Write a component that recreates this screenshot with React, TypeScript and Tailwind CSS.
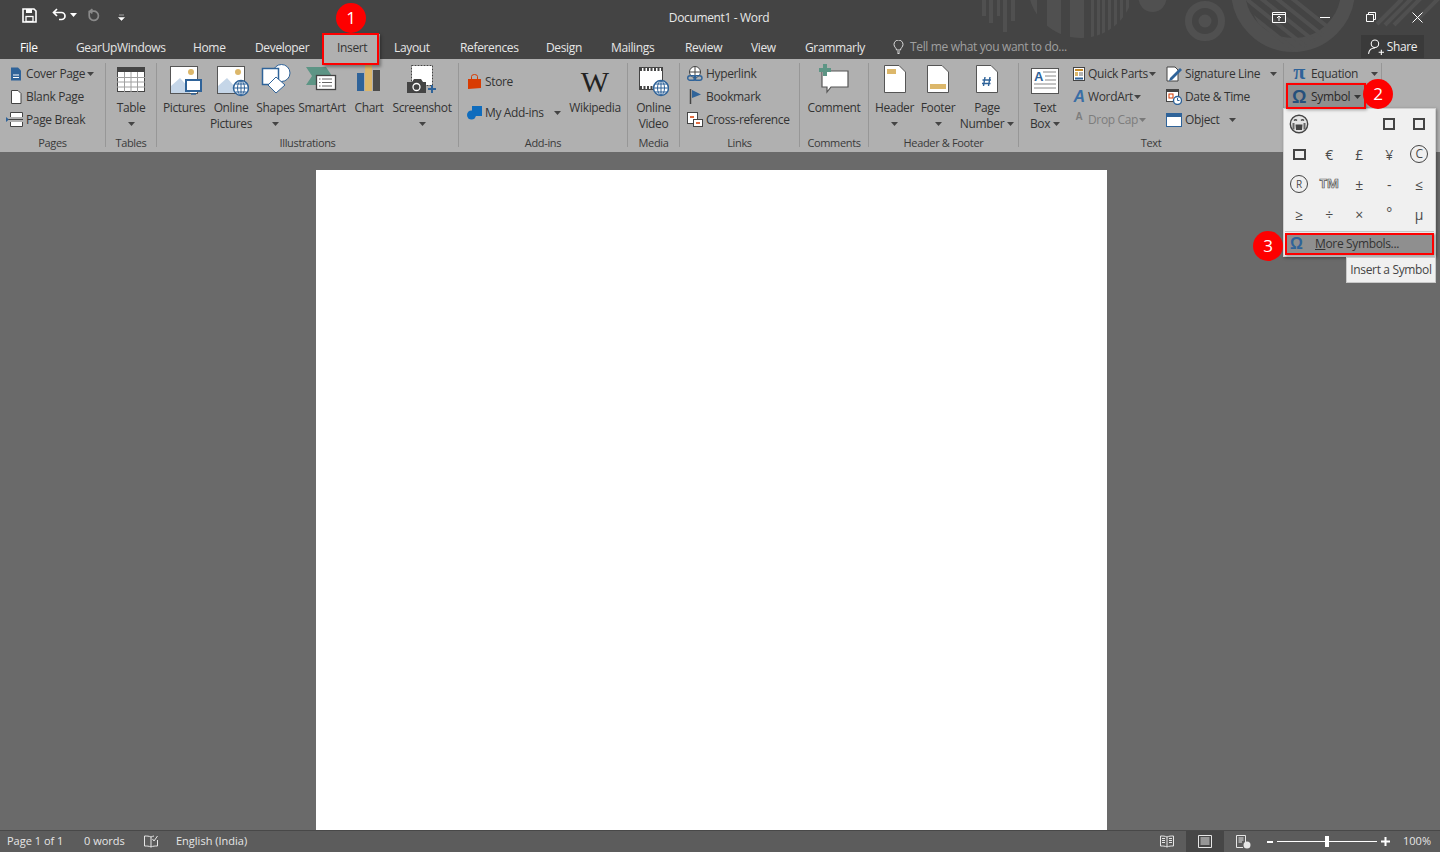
import type { ReactNode } from "react";

const font = "font-['Open_Sans','Noto_Sans',sans-serif]";

function Caret({ className = "" }: { className?: string }) {
  return (
    <svg width="7" height="4" viewBox="0 0 7 4" className={className}>
      <path d="M0 0h7L3.5 4z" fill="#444" />
    </svg>
  );
}

function BigButton({ w, lines, caret, inlineCaret, icon }: { w: string; lines: string[]; caret?: boolean; inlineCaret?: boolean; icon: ReactNode }) {
  return (
    <div className={`${w} flex flex-col items-center shrink-0`}>
      <div className="h-[37px] flex items-start justify-center">{icon}</div>
      {lines.map((l, i) => (
        <div key={l} className="h-[16px] leading-[16px] whitespace-nowrap flex items-center gap-[3px]">
          {l}
          {inlineCaret && i === lines.length - 1 && <Caret />}
        </div>
      ))}
      {caret && (
        <div className="h-[16px] flex items-center">
          <Caret />
        </div>
      )}
    </div>
  );
}

function SmallRow({ icon, label, caret, gap = "gap-[3px]", dim }: { icon: ReactNode; label: string; caret?: ReactNode; gap?: string; dim?: boolean }) {
  return (
    <div className={`h-[23px] flex items-center whitespace-nowrap ${gap} ${dim ? "text-[#7d7d7d]" : ""}`}>
      <div className="w-[16px] h-[16px] flex items-center justify-center shrink-0">{icon}</div>
      <span>{label}</span>
      {caret}
    </div>
  );
}

function Group({ w, label, children }: { w: string; label: string; children: ReactNode }) {
  return (
    <div className={`${w} shrink-0 h-[84px] mt-[4px] border-r border-[#979797] flex flex-col`}>
      <div className="h-[72px] flex">{children}</div>
      <div className="h-[12px] leading-[16px] text-center text-[11px] text-[#3a3a3a] whitespace-nowrap">{label}</div>
    </div>
  );
}

const blue = "#2f6399";

function Picture({ badge }: { badge: ReactNode }) {
  return (
    <svg width="32" height="32" viewBox="0 0 32 32" className="mt-[2px] ml-[4px]">
      <rect x="0.5" y="1.5" width="27" height="27" fill="#fff" stroke="#555" />
      <circle cx="21" cy="7" r="3" fill="#dcb76a" />
      <path d="M1 28V21L10 13L20 24V28z" fill="#c5d6e8" />
      {badge}
    </svg>
  );
}

function CalloutNum({ n, className }: { n: number; className: string }) {
  return (
    <div className={`absolute w-[30px] h-[30px] rounded-full bg-[#fe0000] text-white text-[17px] leading-[30px] text-center ${className}`}>{n}</div>
  );
}

const tabs = [
  { t: "File", w: "w-[56px]", c: "text-white" },
  { t: "GearUpWindows", w: "w-[117px]", c: "text-[#e6e6e6]" },
  { t: "Home", w: "w-[62px]", c: "text-[#e6e6e6]" },
  { t: "Developer", w: "w-[82px]", c: "text-[#e6e6e6]" },
  { t: "Insert", w: "w-[57px] bg-[#b0b0b0]", c: "text-[#333]" },
  { t: "Layout", w: "w-[66px]", c: "text-[#e6e6e6]" },
  { t: "References", w: "w-[86px]", c: "text-[#e6e6e6]" },
  { t: "Design", w: "w-[65px]", c: "text-[#e6e6e6]" },
  { t: "Mailings", w: "w-[74px]", c: "text-[#e6e6e6]" },
  { t: "Review", w: "w-[66px]", c: "text-[#e6e6e6]" },
  { t: "View", w: "w-[54px]", c: "text-[#e6e6e6]" },
  { t: "Grammarly", w: "w-[88px]", c: "text-[#e6e6e6]" },
];

function TitleArt() {
  const c = "#505050";
  return (
    <svg width="1440" height="59" viewBox="0 0 1440 59" className="absolute left-0 top-0 pointer-events-none">
      <defs>
        <clipPath id="big"><circle cx="1081" cy="-15" r="53" /></clipPath>
        <clipPath id="inner"><path d="M1246 0H1340L1322 36L1297 52L1270 46z" /></clipPath>
      </defs>
      <g fill={c}>
        <rect x="982" y="0" width="4" height="16" />
        <rect x="989" y="0" width="4" height="23" />
        <rect x="997" y="0" width="3" height="16" />
        <rect x="1003" y="0" width="4" height="32" />
        <rect x="1011" y="0" width="4" height="21" />
        <g clipPath="url(#big)">
          <rect x="1030" y="0" width="7" height="40" />
          <rect x="1047" y="0" width="14" height="40" />
          <rect x="1070" y="0" width="14" height="40" />
          <rect x="1091" y="0" width="3" height="40" />
          <rect x="1097" y="0" width="3" height="40" />
          <rect x="1102" y="0" width="3" height="40" />
          <rect x="1108" y="0" width="3" height="40" />
          <rect x="1114" y="0" width="3" height="40" />
          <rect x="1120" y="0" width="3" height="40" />
          <rect x="1126" y="0" width="3" height="40" />
        </g>
        <circle cx="1152.5" cy="-2" r="14" />
      </g>
      <circle cx="1205" cy="21" r="16.5" fill="none" stroke={c} strokeWidth="7" />
      <circle cx="1205" cy="21" r="6.5" fill={c} />
      <circle cx="1293" cy="-10" r="55" fill="none" stroke={c} strokeWidth="14" />
      <g clipPath="url(#inner)" stroke={c} strokeWidth="4">
        <path d="M1240 -6L1310 50M1248 -12L1318 44M1256 -18L1326 38M1232 0L1302 56M1264 -24L1334 32" />
      </g>
      <g stroke={c} strokeWidth="4">
        <path d="M1377 24L1402 -1M1385 25L1412 -2M1394 25L1421 -2M1417 20L1440 -3" />
      </g>
    </svg>
  );
}

export default function App() {
  return (
    <div className={`${font} relative w-[1440px] h-[852px] overflow-hidden bg-[#6a6a6a] flex flex-col text-[12px] text-[#333] tracking-[-0.35px]`}>
      {/* title bar + tabs */}
      <div className="relative h-[59px] bg-[#444444] shrink-0 flex flex-col">
        <TitleArt />
        <div className="relative h-[34px] grid grid-cols-[1fr_auto_1fr] items-center">
          <div className="flex items-center pl-[22px] pb-[4px]">
            <svg width="15" height="15" viewBox="0 0 15 15">
              <path d="M1 1H12L14 3V14H1z" fill="none" stroke="#fff" strokeWidth="1.6" />
              <rect x="4" y="1" width="6" height="4" fill="#fff" />
              <rect x="4" y="8.5" width="7" height="5" fill="none" stroke="#fff" strokeWidth="1.3" />
            </svg>
            <svg width="15" height="14" viewBox="0 0 15 14" className="ml-[15px]">
              <path d="M5 1L1.5 4.5L5 8M2 4.5H9.5A3.5 3.5 0 0 1 9.5 11.5H7" fill="none" stroke="#fff" strokeWidth="1.7" />
            </svg>
            <Caret className="ml-[3px] [&_path]:fill-white" />
            <svg width="15" height="15" viewBox="0 0 14 14" className="ml-[9px]">
              <path d="M3 2.5V7A4.3 4.3 0 1 0 7 3H4M6 1L3.5 3L6 5" fill="none" stroke="#8a8a8a" strokeWidth="1.6" />
            </svg>
            <svg width="7" height="7" viewBox="0 0 7 7" className="ml-[17px] mt-[4px]">
              <path d="M1 1H6M0.5 3.5h6L3.5 6.5z" fill="#fff" stroke="#fff" strokeWidth="0.5" />
            </svg>
          </div>
          <div className="text-[#e8e8e8] pr-[2px] pt-[2px]">Document1 - Word</div>
          <div className="flex items-center justify-end h-full">
            <div className="w-[46px] flex justify-center">
              <svg width="14" height="11" viewBox="0 0 14 11">
                <path d="M0.5 0.5H13.5V10.5H0.5zM0.5 2.5H13.5M7 9V4M5 6L7 4L9 6" fill="none" stroke="#fff" />
              </svg>
            </div>
            <div className="w-[46px] flex justify-center">
              <div className="w-[10px] h-px bg-white" />
            </div>
            <div className="w-[46px] flex justify-center">
              <svg width="10" height="10" viewBox="0 0 10 10">
                <path d="M0.5 2.5H7.5V9.5H0.5zM2.5 2.5V0.5H9.5V7.5H7.5" fill="none" stroke="#fff" />
              </svg>
            </div>
            <div className="w-[46px] flex justify-center">
              <svg width="11" height="11" viewBox="0 0 11 11">
                <path d="M0.5 0.5L10.5 10.5M10.5 0.5L0.5 10.5" stroke="#fff" />
              </svg>
            </div>
          </div>
        </div>
        <div className="relative h-[25px] flex items-stretch pl-[6px]">
          {tabs.map((t) => (
            <div key={t.t} className={`${t.w} ${t.c} pl-[14px] leading-[25px] whitespace-nowrap shrink-0 pt-px`}>
              {t.t}
            </div>
          ))}
          <div className="flex items-center ml-[14px] text-[#a0a0a0] whitespace-nowrap">
            <svg width="11" height="14" viewBox="0 0 11 14" className="mr-[6px]">
              <path d="M3.5 10C3.5 8 1 7 1 4.5A4.5 4.5 0 0 1 10 4.5C10 7 7.5 8 7.5 10zM4 12H7M4.5 13.5H6.5" fill="none" stroke="#ddd" />
            </svg>
            Tell me what you want to do...
          </div>
          <div className="ml-auto mr-[16px] mt-px mb-px w-[63px] bg-[#3a3a3a] text-[#eee] flex items-center justify-center gap-[3px]">
            <svg width="16" height="16" viewBox="0 0 15 15">
              <circle cx="6.5" cy="4.5" r="3.5" fill="none" stroke="#fff" />
              <path d="M0.5 14C1 10 3.5 8.5 6.5 8.5M10 12.5H15M12.5 10V15" fill="none" stroke="#fff" />
            </svg>
            Share
          </div>
        </div>
      </div>

      {/* ribbon */}
      <div className="h-[93px] shrink-0 bg-[#b0b0b0] flex items-start">
        <Group w="w-[106px]" label="Pages">
          <div className="pl-[8px] -mt-px flex flex-col">
            <SmallRow
              label="Cover Page"
              caret={<Caret />}
              gap="gap-[2px]"
              icon={<svg width="12" height="14" viewBox="0 0 12 14"><path d="M1 0.5H8L11 3.5V13.5H1z" fill={blue} /><path d="M3 8H9M3 10.5H9" stroke="#fff" /></svg>}
            />
            <SmallRow label="Blank Page" gap="gap-[2px]" icon={<svg width="12" height="14" viewBox="0 0 12 14"><path d="M1.5 0.5H8L11 3.5V13.5H1.5z" fill="#fff" stroke="#444" /></svg>} />
            <SmallRow
              label="Page Break"
              gap="gap-[2px]"
              icon={<svg width="18" height="15" viewBox="0 0 18 15" className="-ml-[2px] shrink-0"><path d="M4.5 5V0.5H16.5V5M4.5 10V14.5H16.5V10" fill="#fff" stroke="#444" /><path d="M1 7.5H17" stroke="#444" /><path d="M0 5L3 7.5L0 10z" fill={blue} /></svg>}
            />
          </div>
        </Group>
        <Group w="w-[51px]" label="Tables">
          <BigButton
            w="w-[50px]"
            lines={["Table"]}
            caret
            icon={
              <svg width="28" height="26" viewBox="0 0 28 26" className="mt-[4px]">
                <rect x="0.5" y="0.5" width="27" height="24" fill="#fff" stroke="#444" />
                <rect x="0" y="0" width="28" height="5" fill="#444" />
                <path d="M7.5 5V25M14 5V25M20.5 5V25M0 10.5H28M0 15H28M0 20H28" stroke="#a0a0a0" />
              </svg>
            }
          />
        </Group>
        <Group w="w-[302px]" label="Illustrations">
          <div className="flex pl-[3px]">
            <BigButton w="w-[48px]" lines={["Pictures"]} icon={<Picture badge={<g><rect x="16" y="15" width="15" height="11" fill="#fff" stroke={blue} strokeWidth="2" /><path d="M21 29H26" stroke={blue} strokeWidth="1.5" /></g>} />} />
            <BigButton
              w="w-[46px]"
              lines={["Online", "Pictures"]}
              icon={<Picture badge={<g><circle cx="24" cy="23" r="7.5" fill="#fff" stroke={blue} strokeWidth="1.5" /><path d="M17 23H31M24 16V30M18.5 19H29.5M18.5 27H29.5" stroke={blue} /><ellipse cx="24" cy="23" rx="3.5" ry="7" fill="none" stroke={blue} /></g>} />}
            />
            <BigButton
              w="w-[43px]"
              lines={["Shapes"]}
              caret
              icon={
                <svg width="30" height="30" viewBox="0 0 30 30" className="mt-[1px]">
                  <circle cx="20.5" cy="9" r="8.5" fill="#fff" stroke={blue} />
                  <rect x="1.5" y="4.5" width="16" height="16" fill="#fff" stroke={blue} strokeWidth="1.5" />
                  <path d="M15 13L24 21L15 29L7 21z" fill="#fff" stroke={blue} />
                </svg>
              }
            />
            <BigButton
              w="w-[50px]"
              lines={["SmartArt"]}
              icon={
                <svg width="32" height="28" viewBox="0 0 32 28" className="mt-[3px]">
                  <path d="M0 1H20L26 10L20 19H0L6 10z" fill="#5d9585" />
                  <rect x="10.5" y="9.5" width="19" height="14" fill="#fff" stroke="#444" strokeWidth="1.3" />
                  <path d="M13 13h1.5M16 13h10M13 16.5h1.5M16 16.5h10M13 20h1.5M16 20h10" stroke="#666" />
                </svg>
              }
            />
            <BigButton
              w="w-[44px]"
              lines={["Chart"]}
              icon={
                <svg width="24" height="28" viewBox="0 0 24 28" className="mt-[2px]">
                  <rect x="0" y="8" width="7" height="18" fill={blue} />
                  <rect x="8" y="0" width="7" height="26" fill="#dcb76a" />
                  <rect x="16" y="5" width="7" height="21" fill="#4b4b4b" />
                </svg>
              }
            />
            <BigButton
              w="w-[62px]"
              lines={["Screenshot"]}
              caret
              icon={
                <svg width="30" height="30" viewBox="0 0 30 30" className="mt-[2px]">
                  <rect x="4.5" y="0.5" width="21" height="20" fill="#fff" stroke="#444" strokeDasharray="2 1" />
                  <path d="M0 17H5L7 14H14L16 17H19V28H0z" fill="#444" />
                  <circle cx="9.5" cy="22" r="3.5" fill="#444" stroke="#fff" strokeWidth="1.3" />
                  <path d="M25 20V28M21 24H29" stroke={blue} strokeWidth="2" />
                </svg>
              }
            />
          </div>
        </Group>
        <Group w="w-[169px]" label="Add-ins">
          <div className="flex">
            <div className="w-[105px] pl-[7px] pt-[7px] flex flex-col gap-[8px]">
              <SmallRow label="Store" icon={<svg width="15" height="16" viewBox="0 0 15 16"><path d="M1 5H14V14L1 15z" fill="#d83b01" /><path d="M4.5 5V2.5A3 2 0 0 1 10.5 2.5V5" fill="none" stroke="#d83b01" /></svg>} />
              <SmallRow
                label="My Add-ins"
                caret={<Caret className="ml-[7px]" />}
                icon={<svg width="15" height="15" viewBox="0 0 15 15"><rect x="5" y="1" width="10" height="10" fill="#0f6cbd" /><circle cx="4.5" cy="10" r="4.5" fill="#0f6cbd" /></svg>}
              />
            </div>
            <div className="w-[62px] flex flex-col items-center">
              <div className="h-[37px] text-[30px] leading-[36px] text-[#222] font-['Liberation_Serif',serif] tracking-normal pt-[1px]">W</div>
              <div className="h-[16px] leading-[16px]">Wikipedia</div>
            </div>
          </div>
        </Group>
        <Group w="w-[52px]" label="Media">
          <BigButton
            w="w-[51px]"
            lines={["Online", "Video"]}
            icon={
              <svg width="30" height="30" viewBox="0 0 30 30" className="mt-[4px]">
                <rect x="0.5" y="0.5" width="23" height="22" fill="#fff" stroke="#444" />
                <path d="M1 2.5H23M1 20.5H23" stroke="#444" strokeWidth="3" strokeDasharray="2 1.5" />
                <circle cx="22" cy="21" r="7.5" fill="#fff" stroke={blue} strokeWidth="1.5" />
                <path d="M15 21H29M22 14V28M16 17H28M16 25H28" stroke={blue} />
                <ellipse cx="22" cy="21" rx="3.5" ry="7" fill="none" stroke={blue} />
              </svg>
            }
          />
        </Group>
        <Group w="w-[120px]" label="Links">
          <div className="pl-[7px] -mt-px flex flex-col">
            <SmallRow
              label="Hyperlink"
              icon={<svg width="16" height="16" viewBox="0 0 16 16"><circle cx="8" cy="6" r="5.5" fill="#fff" stroke="#444" /><path d="M2 6H14M8 0.5V11" stroke="#444" /><rect x="0.7" y="9.7" width="8" height="4.6" rx="2.3" fill="none" stroke={blue} strokeWidth="1.4" /><rect x="7" y="9.7" width="8" height="4.6" rx="2.3" fill="none" stroke={blue} strokeWidth="1.4" /></svg>}
            />
            <SmallRow label="Bookmark" icon={<svg width="14" height="15" viewBox="0 0 14 15"><path d="M2.5 0V15" stroke="#444" strokeWidth="1.5" /><path d="M4 1L13 5.5L4 9z" fill={blue} /></svg>} />
            <SmallRow
              label="Cross-reference"
              icon={<svg width="16" height="15" viewBox="0 0 16 15"><rect x="0.5" y="0.5" width="10" height="11" fill="#fff" stroke="#444" /><rect x="6.5" y="7.5" width="9" height="7" fill="#fff" stroke="#444" /><path d="M3 5H7M9 11H13" stroke="#d83b01" strokeWidth="1.5" /></svg>}
            />
          </div>
        </Group>
        <Group w="w-[69px]" label="Comments">
          <BigButton
            w="w-[68px]"
            lines={["Comment"]}
            icon={
              <svg width="32" height="30" viewBox="0 0 32 30" className="mt-[1px]">
                <path d="M4 7H30V23H13L9 28V23H4z" fill="#fff" stroke="#555" strokeWidth="1.2" />
                <path d="M5 0H9V4H13V8H9V12H5V8H1V4H5z" fill="#5d9585" />
              </svg>
            }
          />
        </Group>
        <Group w="w-[150px]" label="Header & Footer">
          <div className="flex pl-[2px]">
            <BigButton
              w="w-[47px]"
              lines={["Header"]}
              caret
              icon={<svg width="22" height="28" viewBox="0 0 22 28" className="mt-[2px]"><path d="M0.5 0.5H15L21.5 7V27.5H0.5z" fill="#fff" stroke="#555" /><rect x="3" y="4" width="9" height="5" fill="#dcb76a" /></svg>}
            />
            <BigButton
              w="w-[40px]"
              lines={["Footer"]}
              caret
              icon={<svg width="22" height="28" viewBox="0 0 22 28" className="mt-[2px]"><path d="M0.5 0.5H15L21.5 7V27.5H0.5z" fill="#fff" stroke="#555" /><rect x="3" y="19" width="16" height="5" fill="#dcb76a" /></svg>}
            />
            <BigButton
              w="w-[58px]"
              lines={["Page", "Number"]}
              inlineCaret
              icon={
                <svg width="22" height="28" viewBox="0 0 22 28" className="mt-[2px]">
                  <path d="M0.5 0.5H15L21.5 7V27.5H0.5z" fill="#fff" stroke="#555" />
                  <path d="M9 12L7.5 21M14 12L12.5 21M6.5 15H15M6 18.5H14.5" stroke={blue} strokeWidth="1.4" />
                </svg>
              }
            />
          </div>
        </Group>
        <Group w="w-[265px]" label="Text">
          <div className="flex">
            <BigButton
              w="w-[52px]"
              lines={["Text", "Box"]}
              inlineCaret
              icon={
                <svg width="28" height="26" viewBox="0 0 28 26" className="mt-[5px]">
                  <rect x="0.5" y="0.5" width="27" height="25" fill="#fff" stroke="#555" />
                  <path d="M12 4H25M14 8H25M14 12H25M3 16H25M3 20H25" stroke="#888" />
                  <text x="3" y="13" fontSize="13" fontWeight="700" fill={blue} fontFamily="Liberation Sans">A</text>
                </svg>
              }
            />
            <div className="w-[95px] -mt-px flex flex-col">
              <SmallRow
                label="Quick Parts"
                gap="gap-px"
                caret={<Caret />}
                icon={<svg width="12" height="14" viewBox="0 0 12 14"><rect x="0.5" y="0.5" width="11" height="13" fill="#fff" stroke="#444" /><rect x="2" y="2" width="8" height="2" fill="#c58b2a" /><rect x="2" y="5" width="3" height="4" fill="#dcb76a" /><path d="M6 6H10M6 8H10" stroke="#666" /><rect x="2" y="10.5" width="8" height="2" fill={blue} /></svg>}
              />
              <SmallRow
                label="WordArt"
                gap="gap-px"
                caret={<Caret />}
                icon={<span className="text-[16px] font-bold italic text-[#3a6ea5] leading-none font-['Liberation_Sans',sans-serif]">A</span>}
              />
              <SmallRow
                label="Drop Cap"
                dim
                gap="gap-px"
                caret={<Caret className="opacity-50" />}
                icon={<span className="text-[10px] font-bold text-[#7d7d7d] leading-none -mt-[6px] font-['Liberation_Sans',sans-serif]">A</span>}
              />
            </div>
            <div className="w-[118px] -mt-px flex flex-col">
              <SmallRow
                label="Signature Line"
                caret={<Caret className="ml-[7px]" />}
                icon={<svg width="16" height="16" viewBox="0 0 16 16"><path d="M1 1H9L12 4V15H1z" fill="#fff" stroke="#444" /><path d="M4 12L14 2L16 4L6 14L3 15z" fill={blue} /></svg>}
              />
              <SmallRow
                label="Date & Time"
                icon={<svg width="16" height="16" viewBox="0 0 16 16"><rect x="0.5" y="0.5" width="12" height="12" fill="#fff" stroke="#444" /><rect x="0" y="0" width="13" height="3" fill="#444" /><rect x="3" y="5" width="4" height="4" fill="none" stroke="#d83b01" /><circle cx="11.5" cy="11.5" r="4" fill="#fff" stroke={blue} strokeWidth="1.4" /><path d="M11.5 9V11.5H13.5" fill="none" stroke={blue} /></svg>}
              />
              <SmallRow
                label="Object"
                caret={<Caret className="ml-[7px]" />}
                icon={<svg width="16" height="14" viewBox="0 0 16 14"><rect x="0.5" y="0.5" width="15" height="13" fill="#fff" stroke={blue} /><rect x="0" y="0" width="16" height="4" fill={blue} /></svg>}
              />
            </div>
          </div>
        </Group>
        <Group w="w-[98px]" label="">
          <div className="pl-[7px] -mt-px flex flex-col">
            <SmallRow
              label="Equation"
              gap="gap-[4px]"
              caret={<Caret className="ml-[9px]" />}
              icon={<span className="text-[22px] leading-none text-[#2f6399] font-bold font-['Liberation_Serif',serif] -mt-[3px]">π</span>}
            />
            <SmallRow
              label="Symbol"
              gap="gap-[4px]"
              caret={<Caret />}
              icon={<span className="text-[18px] leading-none text-[#2f6399] font-bold font-['Liberation_Sans',sans-serif]">Ω</span>}
            />
          </div>
        </Group>
      </div>

      {/* document */}
      <div className="flex-1 min-h-0 pt-[18px] pl-[316px]">
        <div className="w-[791px] h-full bg-white" />
      </div>

      {/* status bar */}
      <div className="h-[22px] shrink-0 bg-[#5c5c5c] border-t border-[#484848] flex items-center text-[11px] text-[#e6e6e6] tracking-normal">
        <div className="w-[77px] pl-[7px] pb-px">Page 1 of 1</div>
        <div className="w-[67px] pl-[7px] pb-px">0 words</div>
        <svg width="14" height="13" viewBox="0 0 14 13" className="mr-[18px]">
          <path d="M7 2V12C5 11 3 11 0.5 11V1C3 1 5 1 7 2ZM7 2C8 1.5 9 1.2 10 1M13.5 5V11C11 11 9 11 7 12" fill="none" stroke="#e6e6e6" />
          <path d="M8.5 4L10 6L13.5 1" fill="none" stroke="#e6e6e6" />
        </svg>
        <div className="pb-px">English (India)</div>
        <div className="ml-auto flex items-center h-full">
          <div className="w-[38px] flex justify-center">
            <svg width="14" height="13" viewBox="0 0 14 13"><path d="M7 2C5 1 3 1 .5 1V11C3 11 5 11 7 12C9 11 11 11 13.5 11V1C11 1 9 1 7 2V12M2 3.5H5M2 5.5H5M2 7.5H5M9 3.5H12M9 5.5H12M9 7.5H12" fill="none" stroke="#e6e6e6" /></svg>
          </div>
          <div className="w-[38px] h-full bg-[#464646] flex justify-center items-center">
            <svg width="14" height="13" viewBox="0 0 14 13"><path d="M.5 .5H13.5V12.5H.5zM2.5 3H11.5M2.5 5H11.5M2.5 7H11.5M2.5 9H11.5" fill="none" stroke="#e6e6e6" /></svg>
          </div>
          <div className="w-[38px] flex justify-center">
            <svg width="15" height="14" viewBox="0 0 15 14"><path d="M.5 .5H9.5V10M.5 .5V12.5H7M2.5 3H7.5M2.5 5H7.5M2.5 7H6" fill="none" stroke="#e6e6e6" /><circle cx="11" cy="10" r="3.5" fill="#e6e6e6" /></svg>
          </div>
          <div className="w-[6px] h-[2px] bg-white ml-[5px]" />
          <div className="relative w-[100px] h-px bg-white ml-[4px] mr-[3px] flex justify-center items-center">
            <div className="w-[4px] h-[11px] bg-white" />
          </div>
          <svg width="9" height="9" viewBox="0 0 9 9" className="ml-[1px]"><path d="M0 4.5H9M4.5 0V9" stroke="#fff" strokeWidth="2" /></svg>
          <div className="w-[50px] text-right pr-[9px] pb-px">100%</div>
        </div>
      </div>

      {/* symbol gallery */}
      <div className="absolute left-[1283px] top-[108px] w-[153px] h-[149px] bg-[#f0f0f0] border border-[#d0d0d0] shadow-[1px_1px_3px_rgba(0,0,0,0.35)] flex flex-col text-[#4a4a4a] text-[14px]">
        <div className="grid grid-cols-[repeat(5,30px)] grid-rows-[repeat(4,30px)] items-center justify-items-center h-[121px]">
          <svg width="20" height="20" viewBox="0 0 20 20">
            <circle cx="10" cy="10" r="8.7" fill="#e4e4e4" stroke="#444" strokeWidth="1.4" />
            <path d="M5 6.5C6 5.5 7 5.5 8 6.5M12 6.5C13 5.5 14 5.5 15 6.5" fill="none" stroke="#444" strokeWidth="1.3" />
            <path d="M6.5 10.5H13.5L13 16H7z" fill="#444" />
            <path d="M4.5 9V15.5M15.5 9V15.5" stroke="#666" strokeWidth="2" />
          </svg>
          <div />
          <div />
          <div className="w-[12px] h-[12px] border-2 border-[#444]" />
          <div className="w-[12px] h-[12px] border-2 border-[#444]" />
          <div className="w-[13px] h-[11px] border-2 border-[#444]" />
          <div>€</div>
          <div>£</div>
          <div>¥</div>
          <div className="w-[18px] h-[18px] rounded-full border-[1.5px] border-[#444] flex items-center justify-center text-[12px] leading-none">C</div>
          <div className="w-[18px] h-[18px] rounded-full border-[1.5px] border-[#444] flex items-center justify-center text-[10px] leading-none">R</div>
          <div className="text-[13px] font-bold text-[#e0e0e0] [-webkit-text-stroke:0.7px_#555]">TM</div>
          <div>±</div>
          <div>-</div>
          <div>≤</div>
          <div>≥</div>
          <div>÷</div>
          <div>×</div>
          <div className="-mt-[4px]">°</div>
          <div>µ</div>
        </div>
        <div className="h-px bg-[#c6c6c6] mx-px mt-px" />
        <div className="relative mx-px mt-px h-[22px] bg-[#8f8f8f] border-2 border-[#fe0000] flex items-center text-[12px] text-[#333] shadow-[1px_1px_2px_rgba(0,0,0,0.4)]">
          <span className="w-[28px] pl-[3px] text-[16px] leading-none font-bold text-[#2f6399] font-['Liberation_Sans',sans-serif]">Ω</span>
          <span><span className="underline">M</span>ore Symbols...</span>
        </div>
      </div>

      {/* tooltip */}
      <div className="absolute left-[1346px] top-[257px] w-[90px] h-[26px] bg-[#f0f0f0] border border-[#c8c8c8] text-[#444] leading-[24px] text-center whitespace-nowrap">
        Insert a Symbol
      </div>

      {/* red highlight boxes */}
      <div className="absolute left-[322px] top-[33px] w-[57px] h-[32px] border-2 border-[#fe0000] shadow-[2px_2px_3px_rgba(0,0,0,0.35)]" />
      <div className="absolute left-[1286px] top-[83px] w-[80px] h-[26px] border-2 border-[#fe0000] bg-[#00000030] shadow-[1px_1px_3px_rgba(0,0,0,0.35)]" />
      <CalloutNum n={1} className="left-[336px] top-[3px]" />
      <CalloutNum n={2} className="left-[1363px] top-[79px]" />
      <CalloutNum n={3} className="left-[1253px] top-[231px]" />
    </div>
  );
}
